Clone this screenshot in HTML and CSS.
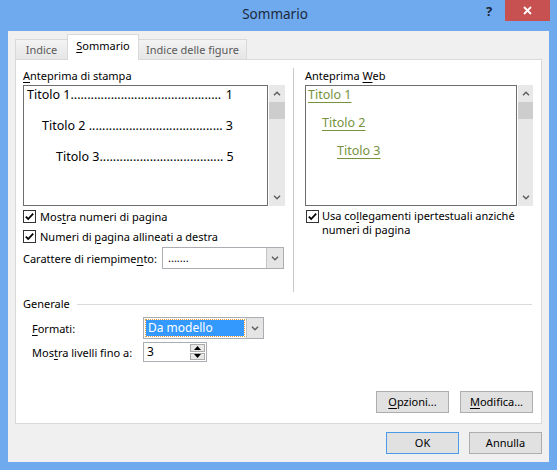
FILE: index.html
```html
<!DOCTYPE html>
<html lang="it">
<head>
<meta charset="utf-8">
<title>Sommario</title>
<link rel="stylesheet" href="styles.css">
</head>
<body>
<div class="window">
  <div class="titlebar">
    <div></div>
    <div class="title">Sommario</div>
    <div class="controls">
      <span class="help">?</span>
      <span class="close"><svg width="9" height="9" viewBox="0 0 9 9"><path d="M1 1 L8 8 M8 1 L1 8" stroke="#fff" stroke-width="1.8" fill="none"/></svg></span>
    </div>
  </div>
  <div class="client">
    <div class="tabs">
      <div class="tab t-indice">Indice</div>
      <div class="tab active t-somm"><u>S</u>ommario</div>
      <div class="tab t-fig">Indice delle figure</div>
    </div>
    <div class="panel">
      <div class="columns">
        <div class="col left">
          <div class="label"><u>A</u>nteprima di stampa</div>
          <div class="listrow">
            <div class="listbox print">
              <div class="toc l1"><span>Titolo 1</span><span class="dots">.............................................</span><span class="num">1</span></div>
              <div class="toc l2"><span>Titolo 2&nbsp;</span><span class="dots">........................................</span><span class="num">3</span></div>
              <div class="toc l3"><span>Titolo 3</span><span class="dots">.....................................</span><span class="num">5</span></div>
            </div>
            <div class="scrollbar">
              <div class="arrow"><svg width="8" height="5" viewBox="0 0 8 5"><path d="M1 4.2 L4 1.2 L7 4.2" stroke="#606060" stroke-width="1.5" fill="none"/></svg></div>
              <div class="thumb"></div>
              <div class="track"></div>
              <div class="arrow"><svg width="8" height="5" viewBox="0 0 8 5"><path d="M1 0.8 L4 3.8 L7 0.8" stroke="#606060" stroke-width="1.5" fill="none"/></svg></div>
            </div>
          </div>
          <div class="check">
            <svg class="cb" width="13" height="13" viewBox="0 0 13 13"><rect x="0.5" y="0.5" width="12" height="12" fill="#fff" stroke="#333"/><path d="M2.8 6.6 L5.2 9 L10.2 3.6" stroke="#000" stroke-width="1.8" fill="none"/></svg>
            <span>Mos<u>t</u>ra numeri di pagina</span>
          </div>
          <div class="check">
            <svg class="cb" width="13" height="13" viewBox="0 0 13 13"><rect x="0.5" y="0.5" width="12" height="12" fill="#fff" stroke="#333"/><path d="M2.8 6.6 L5.2 9 L10.2 3.6" stroke="#000" stroke-width="1.8" fill="none"/></svg>
            <span>Numeri di <u>p</u>agina allineati a destra</span>
          </div>
          <div class="fillrow">
            <span class="filllabel">Carattere di riempime<u>n</u>to:</span>
            <div class="combo fill">
              <span class="val">.......</span>
              <span class="ddbtn"><svg width="8" height="5" viewBox="0 0 8 5"><path d="M1 0.8 L4 3.8 L7 0.8" stroke="#606060" stroke-width="1.5" fill="none"/></svg></span>
            </div>
          </div>
        </div>
        <div class="col right">
          <div class="label">Anteprima <u>W</u>eb</div>
          <div class="listrow">
            <div class="listbox web">
              <div class="link w1">Titolo 1</div>
              <div class="link w2">Titolo 2</div>
              <div class="link w3">Titolo 3</div>
            </div>
            <div class="scrollbar">
              <div class="arrow"><svg width="8" height="5" viewBox="0 0 8 5"><path d="M1 4.2 L4 1.2 L7 4.2" stroke="#606060" stroke-width="1.5" fill="none"/></svg></div>
              <div class="thumb"></div>
              <div class="track"></div>
              <div class="arrow"><svg width="8" height="5" viewBox="0 0 8 5"><path d="M1 0.8 L4 3.8 L7 0.8" stroke="#606060" stroke-width="1.5" fill="none"/></svg></div>
            </div>
          </div>
          <div class="check webcheck">
            <svg class="cb" width="13" height="13" viewBox="0 0 13 13"><rect x="0.5" y="0.5" width="12" height="12" fill="#fff" stroke="#333"/><path d="M2.8 6.6 L5.2 9 L10.2 3.6" stroke="#000" stroke-width="1.8" fill="none"/></svg>
            <span>Usa co<u>l</u>legamenti ipertestuali anziché<br>numeri di pagina</span>
          </div>
        </div>
      </div>
      <div class="general">
        <div class="ghead"><span>Generale</span><span class="gline"></span></div>
        <div class="frow f1">
          <span class="flabel"><u>F</u>ormati:</span>
          <div class="combo fmt">
            <span class="sel"><span class="seltext">Da modello</span></span>
            <span class="ddbtn"><svg width="8" height="5" viewBox="0 0 8 5"><path d="M1 0.8 L4 3.8 L7 0.8" stroke="#606060" stroke-width="1.5" fill="none"/></svg></span>
          </div>
        </div>
        <div class="frow f2">
          <span class="flabel">Mos<u>t</u>ra livelli fino a:</span>
          <div class="spin">
            <span class="spinval">3</span>
            <span class="spinbtns">
              <span class="sb"><svg width="7" height="4" viewBox="0 0 7 4"><path d="M0 4 L3.5 0 L7 4 Z" fill="#000"/></svg></span>
              <span class="sb"><svg width="7" height="4" viewBox="0 0 7 4"><path d="M0 0 L3.5 4 L7 0 Z" fill="#000"/></svg></span>
            </span>
          </div>
        </div>
      </div>
      <div class="panelbtns">
        <div class="btn"><u>O</u>pzioni...</div>
        <div class="btn"><u>M</u>odifica...</div>
      </div>
    </div>
    <div class="dlgbtns">
      <div class="btn default">OK</div>
      <div class="btn">Annulla</div>
    </div>
  </div>
</div>
</body>
</html>
```

FILE: styles.css
```css
* { box-sizing: border-box; }
html, body { margin: 0; padding: 0; }
body {
  width: 557px;
  height: 470px;
  overflow: hidden;
  background: #6fa9ee;
  font-family: "Noto Sans", "Open Sans", sans-serif;
  font-size: 11px;
  color: #000;
}
u { text-decoration: underline; text-underline-offset: 2px; }

.window {
  width: 557px;
  height: 470px;
  display: flex;
  flex-direction: column;
}

/* title bar */
.titlebar {
  height: 31px;
  display: grid;
  grid-template-columns: 1fr auto 1fr;
  align-items: start;
  padding-right: 7px;
}
.title {
  font-size: 13.5px;
  line-height: 31px;
  color: #1d2a3b;
  margin-top: -1px;
}
.controls {
  justify-self: end;
  display: flex;
  align-items: flex-start;
}
.help {
  width: 26px;
  margin-right: 3px;
  text-align: center;
  font-weight: bold;
  font-size: 13px;
  line-height: 22px;
  color: #1b2633;
}
.close {
  width: 45px;
  height: 21px;
  background: #c75050;
  display: flex;
  align-items: center;
  justify-content: center;
}

/* client */
.client {
  margin: 0 8px 8px 8px;
  height: 431px;
  background: #f0f0f0;
  padding: 3px 7px 8px 7px;
  display: flex;
  flex-direction: column;
}
.tabs {
  height: 25px;
  display: flex;
  align-items: flex-end;
}
.tab {
  height: 20px;
  margin-right: -1px;
  border: 1px solid #d9d9d9;
  border-bottom: none;
  background: linear-gradient(#f3f3f3, #e6e6e6);
  color: #5a5a5a;
  text-align: center;
  line-height: 19px;
}
.t-indice { width: 53px; }
.t-somm { width: 72px; }
.t-fig { width: 109px; }
.tab.active {
  height: 26px;
  margin-bottom: -1px;
  background: #fff;
  color: #000;
  position: relative;
  z-index: 1;
  line-height: 22px;
}

.panel {
  height: 365px;
  border: 1px solid #d9d9d9;
  background: #fff;
  padding: 8px 8px 10px 7px;
  display: flex;
  flex-direction: column;
}
.columns {
  height: 224px;
  display: flex;
}
.col.left { width: 262px; }
.col.right {
  width: 240px;
  margin-left: 8px;
  border-left: 1px solid #c9c9c9;
  padding-left: 11px;
}
.label {
  line-height: 16px;
  height: 16px;
  white-space: nowrap;
}
.listrow {
  margin-top: 1px;
  height: 121px;
  display: flex;
  gap: 1px;
}
.listbox {
  border: 1px solid #6e6e6e;
  background: #fff;
  height: 121px;
}
.listbox.print {
  width: 245px;
  padding-right: 34px;
  font-size: 12.5px;
}
.listbox.web {
  width: 212px;
  font-size: 12.5px;
}
.scrollbar {
  width: 16px;
  height: 121px;
  background: #e8e8e8;
  display: flex;
  flex-direction: column;
}
.col.right .scrollbar { width: 15px; }
.arrow {
  height: 17px;
  display: flex;
  align-items: center;
  justify-content: center;
}
.thumb {
  height: 17px;
  background: #cdcdcd;
}
.track { flex: 1; }

.toc {
  display: flex;
  line-height: 18px;
  height: 18px;
  white-space: nowrap;
}
.toc + .toc { margin-top: 13px; }
.toc.l1 { padding-left: 3px; }
.toc.l2 { padding-left: 18px; }
.toc.l3 { padding-left: 32px; }
.toc .dots { flex: none; }
.toc .num { margin-left: auto; padding-left: 3px; }

.link {
  color: #76923c;
  text-decoration: underline;
  text-underline-offset: 3px;
  line-height: 18px;
  height: 18px;
}
.link + .link { margin-top: 10px; }
.w1 { padding-left: 2px; }
.w2 { padding-left: 16px; }
.w3 { padding-left: 31px; }

.check {
  height: 20px;
  display: flex;
  align-items: center;
  white-space: nowrap;
}
.cb { flex: none; margin-right: 4px; }
.webcheck {
  height: auto;
  align-items: flex-start;
  margin-top: 3px;
  line-height: 14px;
}
.webcheck .cb { margin-top: 1px; margin-left: 1px; margin-right: 3px; }

.fillrow {
  margin-top: 1px;
  height: 22px;
  display: flex;
  align-items: center;
}
.filllabel { width: 139px; white-space: nowrap; }
.combo {
  height: 22px;
  border: 1px solid #abadb3;
  background: #fff;
  display: flex;
}
.combo.fill { width: 122px; }
.combo .val {
  flex: 1;
  padding-left: 5px;
  line-height: 19px;
}
.ddbtn {
  width: 17px;
  background: #e5e5e5;
  border-left: 1px solid #c4c4c4;
  display: flex;
  align-items: center;
  justify-content: center;
}

.general {
  display: flex;
  flex-direction: column;
}
.ghead {
  margin-top: 4px;
  height: 16px;
  line-height: 16px;
  display: flex;
  align-items: center;
  gap: 7px;
}
.gline {
  flex: 1;
  height: 1px;
  background: #dadada;
  margin-right: 1px;
}
.frow {
  display: flex;
  align-items: center;
  padding-left: 9px;
}
.frow.f1 { margin-top: 5px; height: 22px; }
.frow.f2 { margin-top: 3px; height: 20px; }
.flabel { width: 111px; white-space: nowrap; }
.combo.fmt { width: 121px; }
.sel {
  flex: 1;
  padding: 2px;
}
.seltext {
  display: block;
  height: 100%;
  background: #3399ff;
  color: #fff;
  outline: 1px dotted #e89a3c;
  padding-left: 2px;
  font-size: 12px;
  line-height: 16px;
}
.spin {
  width: 64px;
  height: 20px;
  border: 1px solid #abadb3;
  background: #fff;
  display: flex;
}
.spinval {
  flex: 1;
  padding-left: 3px;
  line-height: 18px;
  font-size: 12px;
}
.spinbtns {
  width: 16px;
  padding: 1px 1px 1px 0;
  display: flex;
  flex-direction: column;
  gap: 1px;
}
.sb {
  flex: 1;
  background: #e8e8e8;
  border: 1px solid #acacac;
  display: flex;
  align-items: center;
  justify-content: center;
}

.panelbtns {
  margin-top: auto;
  display: flex;
  justify-content: flex-end;
  gap: 11px;
}
.btn {
  width: 73px;
  height: 22px;
  border: 1px solid #adadad;
  background: #e1e1e1;
  text-align: center;
  line-height: 20px;
}
.dlgbtns {
  margin-top: 8px;
  display: flex;
  justify-content: flex-end;
  gap: 10px;
}
.btn.default { border-color: #4c9be8; }
```
